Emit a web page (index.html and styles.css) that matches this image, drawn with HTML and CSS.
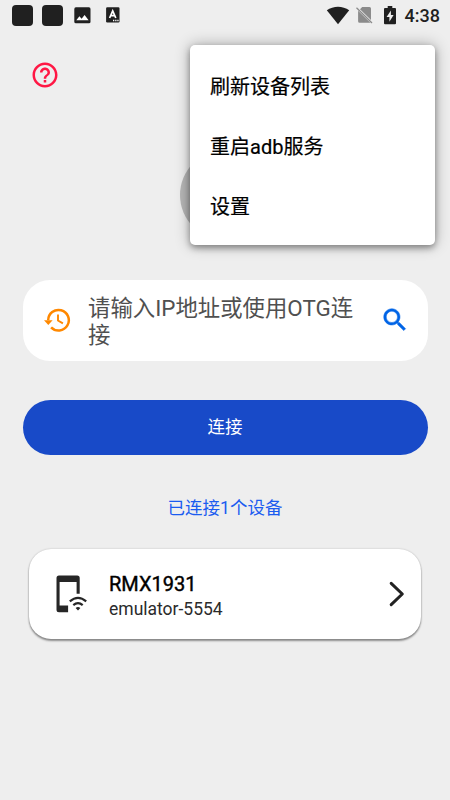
FILE: index.html
```html
<!DOCTYPE html>
<html lang="zh-CN">
<head>
<meta charset="utf-8">
<meta name="viewport" content="width=device-width">
<title>ADB</title>
<link rel="stylesheet" href="styles.css">
</head>
<body>
<div class="status">
  <span class="app-dot"></span>
  <span class="app-dot"></span>
  <svg class="st-image" width="17" height="17" viewBox="0 0 17 17"><rect x=".3" y=".3" width="16.2" height="16" rx="1.6" fill="#202020"/><path d="M2.3 13.3 5.4 9.2l2.2 2.6 3-3.9 4 5.4z" fill="#fff"/></svg>
  <svg class="st-letter" width="14" height="16" viewBox="0 0 14 16"><rect x=".1" y=".2" width="13.4" height="15.2" rx="1.2" fill="#202020"/><path d="M3.6 11 6.7 3.8 9.8 11M4.8 8.7h3.8" fill="none" stroke="#fff" stroke-width="1.7"/><path d="M7 13.5h1.3M9.2 13.5h1.3M11.3 13.5h1.3" stroke="#fff" stroke-width="1.3"/></svg>
  <span class="spacer"></span>
  <svg class="st-wifi" width="24" height="19" viewBox="0 0 24 19"><path d="M.8 4.3C7.4-.5 16.600-.5 23.200 4.300L12 18.200z" fill="#202020"/></svg>
  <svg class="st-sim" width="17" height="18" viewBox="0 0 17 18"><path d="M6.200 1h7.300q1.500 0 1.500 1.500v11.400L4 3.200zM2.100 4.800 14.400 16.700H3.600q-1.500 0-1.500-1.500z" fill="#8b8b8b"/><path d="M.5 1.700 16 17" stroke="#8b8b8b" stroke-width="1.300"/></svg>
  <svg class="st-battery" width="12" height="19" viewBox="0 0 12 19"><path d="M3.700 0h4.600v2H11q1 0 1 1v14.300q0 1-1 1H1q-1 0-1-1V3q0-1 1-1h2.700z" fill="#202020"/><path d="M6.900 4.400 2.600 11h2.800v4.800L9.600 9H6.900z" fill="#eee"/></svg>
  <span class="clock">4:38</span>
</div>
<header class="header">
  <svg class="help" width="30" height="30" viewBox="0 0 24 24" fill="#ff1744"><path d="M11 18h2v-2h-2v2zm1-16C6.480 2 2 6.480 2 12s4.480 10 10 10 10-4.480 10-10S17.520 2 12 2zm0 18c-4.410 0-8-3.590-8-8s3.590-8 8-8 8 3.590 8 8-3.590 8-8 8zm0-14c-2.210 0-4 1.790-4 4h2c0-1.100.9-2 2-2s2 .9 2 2c0 2-3 1.750-3 5h2c0-2.250 3-2.500 3-5 0-2.210-1.790-4-4-4z"/></svg>
</header>
<div class="avatar"></div>
<main class="main">
  <div class="field">
    <svg class="history" width="27" height="24" viewBox="0 0 27 24" fill="none" stroke="#ff8800"><path d="M4.200 12.300A10.300 10.300 0 1 1 7.100 19.400" stroke-width="2.500"/><path d="M0 12.300h8.600l-4.300 4.600z" fill="#ff8800" stroke="none"/><path d="M14 6.500v6l4.900 2.900" stroke-width="1.900"/></svg>
    <p class="hint">请输入IP地址或使用OTG连接</p>
    <svg class="search" width="30" height="30" viewBox="0 0 24 24" fill="#0064e6" stroke="#0064e6" stroke-width=".4"><path d="M15.500 14h-.79l-.28-.27C15.410 12.590 16 11.110 16 9.500 16 5.910 13.090 3 9.500 3S3 5.910 3 9.500 5.910 16 9.500 16c1.610 0 3.090-.59 4.230-1.570l.27.28v.79l5 4.990L20.490 19l-4.990-5zm-6 0C7.010 14 5 11.990 5 9.500S7.010 5 9.500 5 14 7.010 14 9.500 11.990 14 9.500 14z"/></svg>
  </div>
  <button class="connect">连接</button>
  <p class="count">已连接1个设备</p>
  <div class="device">
    <svg class="phone" width="32" height="38" viewBox="0 0 32 38" fill="#262626"><path d="M3 .5h18.200q2.500 0 2.500 2.500V18.800H20.600V7H3.600v23.400h8.500v6.800H3Q.5 37.200.5 34.700V3Q.5.5 3 .5z"/><path d="M13.800 26.300Q22 19.300 30.200 26.300M17.300 30.100Q22 26.100 26.700 30.100" fill="none" stroke="#262626" stroke-width="2.200"/><path d="M19.600 33q2.400-2 4.800 0L22 35.500z"/></svg>
    <div class="info">
      <div class="name">RMX1931</div>
      <div class="serial">emulator-5554</div>
    </div>
    <svg class="chevron" width="16" height="26" viewBox="0 0 16 26"><path d="M2.200 2.300 13.300 13 2.200 23.700" fill="none" stroke="#222" stroke-width="3" stroke-linecap="round" stroke-linejoin="round"/></svg>
  </div>
</main>
<div class="menu">
  <div class="item">刷新设备列表</div>
  <div class="item">重启adb服务</div>
  <div class="item">设置</div>
</div>
</body>
</html>
```
FILE: styles.css
```css
* { box-sizing: border-box; }
body {
  margin: 0;
  width: 450px;
  height: 800px;
  position: relative;
  overflow: hidden;
  background: #eee;
  color: #000;
  font-family: Roboto, "Noto Sans CJK SC", sans-serif;
}
p { margin: 0; }
svg { display: block; flex: none; }
.status { display: flex; align-items: center; height: 30px; padding: 0 10px 0 12px; }
.app-dot { width: 21px; height: 21px; border-radius: 4px; background: #202020; margin-right: 9px; }
.st-image { margin-left: 2px; }
.st-letter { margin-left: 15px; }
.spacer { flex: 1; }
.st-wifi { margin-right: 6px; }
.st-sim { margin-right: 11px; }
.st-battery { margin-right: 9px; }
.clock { font-size: 18px; font-weight: 500; line-height: 30px; padding-top: 1px; color: #202020; }
.header { height: 120px; padding: 30px; }
.avatar { width: 90px; height: 90px; margin: 0 auto; border-radius: 50%; background: #b6b6b6; }
.main { padding: 39.500px 22.500px 0; }
.field { display: flex; align-items: center; height: 81.500px; border-radius: 27px; background: #fff; padding: 0 18px 0 21px; }
.hint { flex: 1; margin: 0 24px 0 17.500px; padding-top: 3px; font-size: 22.400px; line-height: 26.400px; color: #505050; }
.connect { display: block; width: 100%; height: 55px; margin-top: 39px; padding: 0; border: 0; border-radius: 28px; background: #184ac8; color: #fff; font: inherit; font-size: 17.500px; line-height: 55px; }
.count { margin-top: 38px; font-size: 17.500px; line-height: 30px; text-align: center; color: #1b5cf0; }
.device { display: flex; align-items: center; height: 90px; margin: 26px 6.500px 0 6px; padding: 0 16px 0 27.500px; border-radius: 22px; background: #fff; box-shadow: 0 2px 2px rgba(0,0,0,.4), 0 0 2px rgba(0,0,0,.22); }
.info { flex: 1; margin-left: 21px; padding-top: 6px; }
.name { font-size: 20px; line-height: 25px; -webkit-text-stroke: .4px #000; }
.serial { font-size: 17.500px; line-height: 25px; color: #2b2b2b; }
.menu { position: absolute; left: 190px; top: 45px; width: 245px; height: 200px; padding: 12px 0 8px; border-radius: 5px; background: #fff; box-shadow: 0 3px 6px rgba(0,0,0,.35), 0 0 15px rgba(0,0,0,.3); }
.item { height: 60px; padding: 0 20px; font-size: 20px; line-height: 60px; -webkit-text-stroke: .2px #000; }
```
